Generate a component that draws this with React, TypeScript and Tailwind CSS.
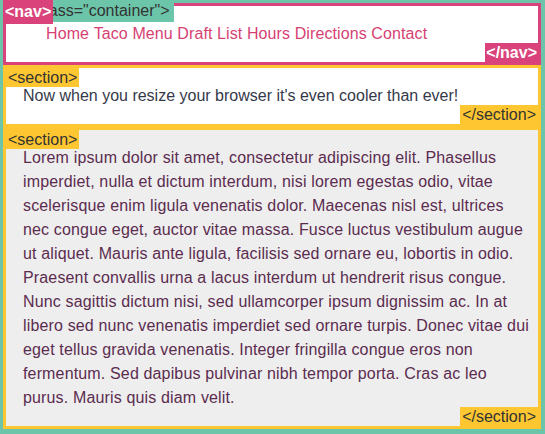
import React from 'react';

const links = ['Home', 'Taco Menu', 'Draft List', 'Hours', 'Directions', 'Contact'];

const lorem =
  'Lorem ipsum dolor sit amet, consectetur adipiscing elit. Phasellus imperdiet, nulla et dictum interdum, nisi lorem egestas odio, vitae scelerisque enim ligula venenatis dolor. Maecenas nisl est, ultrices nec congue eget, auctor vitae massa. Fusce luctus vestibulum augue ut aliquet. Mauris ante ligula, facilisis sed ornare eu, lobortis in odio. Praesent convallis urna a lacus interdum ut hendrerit risus congue. Nunc sagittis dictum nisi, sed ullamcorper ipsum dignissim ac. In at libero sed nunc venenatis imperdiet sed ornare turpis. Donec vitae dui eget tellus gravida venenatis. Integer fringilla congue eros non fermentum. Sed dapibus pulvinar nibh tempor porta. Cras ac leo purus. Mauris quis diam velit.';

// little tag badges that sit on the element corners
const SectionTag: React.FC<{ text: string; end?: boolean }> = ({ text, end }) => (
  <span
    className={
      'absolute bg-[#fec631] px-[2px] text-[16px] leading-[19px] text-[#333333] ' +
      (end ? 'bottom-0 right-0' : 'top-0 left-0')
    }
  >
    {text}
  </span>
);

export default function App() {
  return (
    <div
      className="relative w-[545px] h-[434px] border-l-[3px] border-t-[3px] border-r-4 border-b-[5px] border-[#6cc5a9] bg-white text-[16px] leading-6"
      style={{ fontFamily: '"Liberation Sans", Arial, sans-serif' }}
    >
      <span className="absolute -left-[3px] -top-[3px] z-10 bg-[#6cc5a9] pl-[3px] pr-[4px] leading-[22px] text-[#333333]">
        {'<div class="container">'}
      </span>

      <nav className="relative h-[62px] border-[3px] border-[#d9427a] bg-white">
        <span className="absolute left-[-3px] top-[-6px] z-20 bg-[#d9427a] px-[2px] font-bold leading-[24px] text-white">
          {'<nav>'}
        </span>
        <ul className="pl-[40px] pt-4 tracking-[0.1px] text-[#d63f73]">
          {links.map((l, i) => (
            <React.Fragment key={l}>
              <li className="inline">{l}</li>
              {i < links.length - 1 ? ' ' : null}
            </React.Fragment>
          ))}
        </ul>
        <span className="absolute bottom-0 right-0 bg-[#d9427a] px-[1px] font-bold leading-[19px] text-white">
          {'</nav>'}
        </span>
      </nav>

      <section className="relative border-[3px] border-[#fec631] bg-white py-4 pl-[17px] pr-2 text-[#353a4a]">
        <SectionTag text="<section>" />
        <p>Now when you resize your browser it's even cooler than ever!</p>
        <SectionTag text="</section>" end />
      </section>

      <section className="relative border-[3px] border-[#fec631] bg-[#eeeeee] py-4 pl-[17px] pr-2 text-[#5b2c4f]">
        <SectionTag text="<section>" />
        <p className="tracking-[0.15px]">{lorem}</p>
        <SectionTag text="</section>" end />
      </section>
    </div>
  );
}
